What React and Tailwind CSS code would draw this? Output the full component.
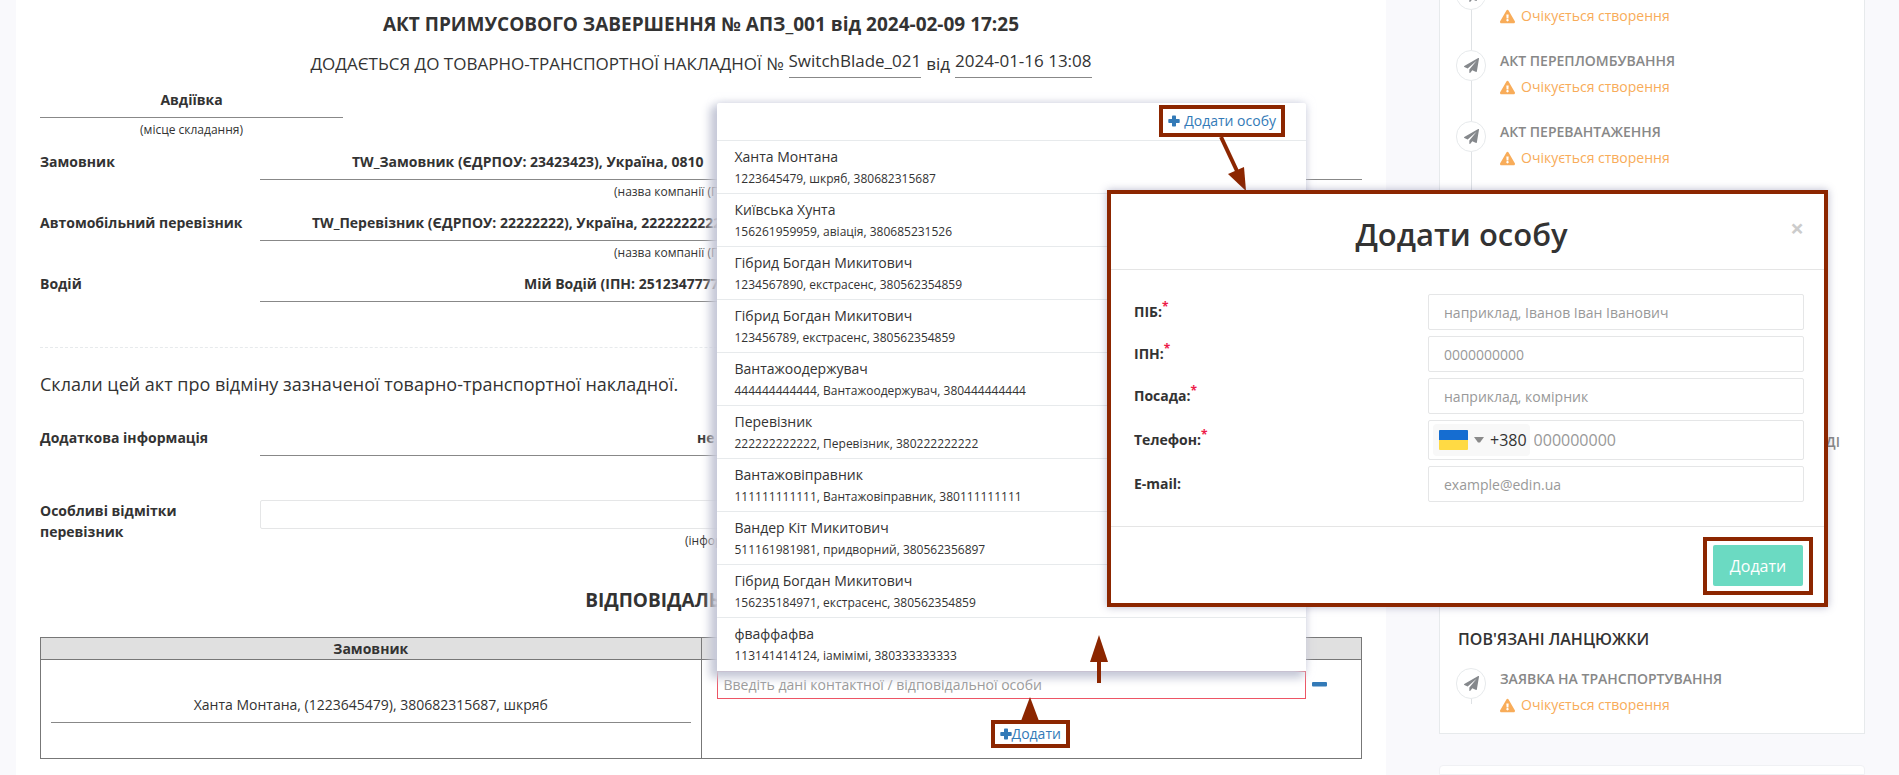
import { FaExclamationTriangle } from "react-icons/fa";

const people = [
  ["Ханта Монтана", "1223645479, шкряб, 380682315687"],
  ["Київська Хунта", "156261959959, авіація, 380685231526"],
  ["Гібрид Богдан Микитович", "1234567890, екстрасенс, 380562354859"],
  ["Гібрид Богдан Микитович", "123456789, екстрасенс, 380562354859"],
  ["Вантажоодержувач", "444444444444, Вантажоодержувач, 380444444444"],
  ["Перевізник", "222222222222, Перевізник, 380222222222"],
  ["Вантажовіправник", "111111111111, Вантажовіправник, 380111111111"],
  ["Вандер Кіт Микитович", "511161981981, придворний, 380562356897"],
  ["Гібрид Богдан Микитович", "156235184971, екстрасенс, 380562354859"],
  ["фваффафва", "113141414124, іамімімі, 380333333333"],
];

function PlaneIcon() {
  return (
    <svg width="15" height="15" viewBox="0 0 1792 1792" fill="currentColor" aria-hidden="true">
      <path d="M1764 11q33 24 27 64l-256 1536q-5 29-32 45-14 8-31 8-11 0-24-5l-453-185-242 295q-18 23-49 23-13 0-22-4-19-7-30.500-23.500t-11.500-36.500v-349l864-1059-1069 925-395-162q-37-14-40-55-2-40 32-59l1664-960q15-9 32-9 20 0 36 11z" />
    </svg>
  );
}

function PlusIcon() {
  return (
    <svg width="12" height="12" viewBox="0 0 12 12" fill="currentColor" aria-hidden="true">
      <rect x="4" y="0.500" width="4" height="11" rx="0.800" />
      <rect x="0.300" y="4" width="11.400" height="4" rx="0.800" />
    </svg>
  );
}

function Field({ label, value, caption, indent, captionIndent }) {
  return (
    <div className="flex">
      <div className="w-[220px] shrink-0 leading-5 font-bold">{label}</div>
      <div className="min-w-0 flex-1 overflow-hidden whitespace-nowrap">
        <div className={"border-b border-[#888] pb-[7px] leading-5 font-bold " + indent}>{value}</div>
        {caption && <div className={"mt-[3px] text-xs leading-[17px] " + captionIndent}>{caption}</div>}
      </div>
    </div>
  );
}

function ChainItem({ title, height = "h-[71px]", titleClass = "" }) {
  return (
    <li className={"flex gap-3.5 " + height}>
      <div className="flex w-[30px] shrink-0 flex-col items-center">
        <span className="flex h-[31px] w-[30px] shrink-0 items-center justify-center rounded-full border border-[#e7eaec] text-[#85888c]">
          <PlaneIcon />
        </span>
        <span className="w-px flex-1 bg-[#dfe2e5]" />
      </div>
      <div className="flex-1 whitespace-nowrap">
        <a href="#doc" className={"block leading-[22px] font-semibold text-[#888] " + titleClass}>{title}</a>
        <p className="mt-[3px] flex items-center gap-1.5 leading-6 text-[#f8ac59]">
          <FaExclamationTriangle className="size-[15px]" />
          Очікується створення
        </p>
      </div>
    </li>
  );
}

function PeopleMenu() {
  return (
    <div className="absolute right-0 bottom-full left-0 z-10 rounded-t-xs bg-white text-left shadow-[0_0_10px_rgba(190,194,215,0.6),-5px_5px_10px_2px_#c8cbd8]">
      <div className="flex h-[38px] items-center justify-end border-b border-[#e7eaec] pr-[21px]">
        <div className="relative border-4 border-[#8c2600] px-[5px]">
          <button className="flex items-center gap-1 leading-6 text-[#337ab7]">
            <PlusIcon />
            Додати особу
          </button>
          <svg className="absolute top-full left-14 z-30 mt-1" width="30" height="54" viewBox="0 0 30 54" aria-hidden="true">
            <path d="M2 0 L18 34" stroke="#8c2600" strokeWidth="4" />
            <path d="M9 37 L25 30 L27 54 Z" fill="#8c2600" />
          </svg>
        </div>
      </div>
      <ul>
        {people.map(([name, info], i) => (
          <li key={i} className="h-[53px] border-b border-[#e7eaec] px-[18px] pt-1.5 last:border-0">
            <div className="leading-5">{name}</div>
            <div className="text-xs leading-6">{info}</div>
          </li>
        ))}
      </ul>
    </div>
  );
}

function FormRow({ id, label, required, children }) {
  return (
    <div className="flex items-center">
      <label htmlFor={id} className="w-[294px] shrink-0 leading-5 font-bold">
        {label}
        {required && <sup className="text-xs text-[#ed1c4a]">*</sup>}
      </label>
      {children}
    </div>
  );
}

const inputClass =
  "h-9 min-w-0 flex-1 rounded-xs border border-[#e5e6e7] px-[15px] outline-none placeholder:text-[#999]";

function AddPersonModal() {
  return (
    <div
      role="dialog"
      aria-label="Додати особу"
      className="absolute top-[190px] right-[71px] z-20 w-[721px] border-4 border-[#8c2600] bg-white shadow-[0_0_8px_rgba(80,80,130,0.4)]"
    >
      <div className="relative flex h-[76px] items-center justify-center border-b border-[#e5e5e5] pr-3">
        <h2 className="mt-1 text-[31px] leading-9 font-semibold">Додати особу</h2>
        <button aria-label="Закрити" className="absolute top-6 right-5 text-2xl leading-5 font-bold text-[#ccc]">
          ×
        </button>
      </div>
      <form className="flex flex-col gap-1.5 py-6 pr-5 pl-[23px]">
        <FormRow id="pib" label="ПІБ:" required>
          <input id="pib" className={inputClass} placeholder="наприклад, Іванов Іван Іванович" />
        </FormRow>
        <FormRow id="ipn" label="ІПН:" required>
          <input id="ipn" className={inputClass} placeholder="0000000000" />
        </FormRow>
        <FormRow id="posada" label="Посада:" required>
          <input id="posada" className={inputClass} placeholder="наприклад, комірник" />
        </FormRow>
        <FormRow id="phone" label="Телефон:" required>
          <div className="flex h-10 flex-1 items-center rounded-xs border border-[#e5e6e7] px-1 text-base">
            <button type="button" className="flex h-8 items-center rounded bg-[#f8f8f8] pr-[3px] pl-1.5">
              <svg width="29" height="20" viewBox="0 0 29 20" aria-hidden="true">
                <rect width="29" height="20" rx="1" fill="#ffda44" />
                <path d="M1 0H28a1 1 0 0 1 1 1V10H0V1a1 1 0 0 1 1-1Z" fill="#156dd1" />
              </svg>
              <svg className="mx-1.5" width="10" height="6" viewBox="0 0 10 6" aria-hidden="true">
                <path d="M0 0H10L6 5.500H4Z" fill="#8a8a8a" />
              </svg>
              +380
            </button>
            <input id="phone" className="min-w-0 flex-1 px-1 outline-none placeholder:text-[#999]" placeholder="000000000" />
          </div>
        </FormRow>
        <FormRow id="email" label="E-mail:">
          <input id="email" type="email" className={inputClass} placeholder="example@edin.ua" />
        </FormRow>
      </form>
      <div className="flex justify-end border-t border-[#e5e5e5] pt-2.5 pr-[11px] pb-2">
        <div className="border-4 border-[#8c2600] px-1.5 pt-1 pb-[5px]">
          <button className="h-[41px] w-[90px] rounded-xs bg-[#6bdac2] text-base text-white">Додати</button>
        </div>
      </div>
    </div>
  );
}

export default function App() {
  return (
    <div className="relative flex h-screen overflow-hidden bg-[#f9f9fc] pr-[34px] pl-4 font-['Open_Sans','Noto_Sans',sans-serif] text-sm text-[#333]">
      <main className="min-w-0 flex-1 bg-white px-6 pt-3">
        <h1 className="text-center text-[19px] leading-6 font-bold">
          АКТ ПРИМУСОВОГО ЗАВЕРШЕННЯ № АПЗ_001 від 2024-02-09 17:25
        </h1>
        <div className="mt-2.5 flex h-8 justify-center gap-[5px] text-[17px] leading-6">
          <span className="pt-1.5">ДОДАЄТЬСЯ ДО ТОВАРНО-ТРАНСПОРТНОЇ НАКЛАДНОЇ №</span>
          <span className="border-b border-[#888] pt-[3px]">SwitchBlade_021</span>
          <span className="pt-1.5">від</span>
          <span className="border-b border-[#888] pt-[3px]">2024-01-16 13:08</span>
        </div>
        <div className="mt-3 w-[303px] text-center">
          <div className="border-b border-[#888] pb-[7px] leading-5 font-bold">Авдіївка</div>
          <div className="mt-[3px] text-xs leading-[17px]">(місце складання)</div>
        </div>
        <section className="mt-3.5 flex flex-col gap-[13px]">
          <Field
            label="Замовник"
            value="TW_Замовник (ЄДРПОУ: 23423423), Україна, 0810"
            indent="pl-[92px]"
            caption="(назва компанії (ПІБ))"
            captionIndent="pl-[354px]"
          />
          <Field
            label="Автомобільний перевізник"
            value="TW_Перевізник (ЄДРПОУ: 22222222), Україна, 2222222222"
            indent="pl-[52px]"
            caption="(назва компанії (ПІБ))"
            captionIndent="pl-[354px]"
          />
          <Field label="Водій" value="Мій Водій (ІПН: 2512347777)" indent="pl-[264px]" />
        </section>
        <hr className="mt-[45px] border-0 border-t border-dashed border-[#e7eaec]" />
        <p className="mt-6 text-lg leading-6 font-medium">
          Склали цей акт про відміну зазначеної товарно-транспортної накладної.
        </p>
        <div className="mt-8">
          <Field label="Додаткова інформація" value="не вказано" indent="pl-[437px]" />
        </div>
        <div className="mt-11 flex">
          <label htmlFor="marks" className="w-[220px] shrink-0 pr-10 leading-[21px] font-bold">
            Особливі відмітки перевізник
          </label>
          <div className="flex-1">
            <input id="marks" className="block h-[29px] w-full rounded-xs border border-[#e5e6e7] px-2 outline-none" />
            <div className="mt-[3px] pl-[425px] text-xs leading-[17px]">(інформація)</div>
          </div>
        </div>
        <h2 className="mt-[39px] text-center text-[19px] leading-6 font-bold">ВІДПОВІДАЛЬНІ ОСОБИ</h2>
        <table className="mt-[25px] w-full table-fixed border-collapse text-center">
          <thead>
            <tr className="h-[22px] bg-[#e0e0e0]">
              <th className="border border-[#777] font-bold">Замовник</th>
              <th className="border border-[#777] font-bold">Перевізник</th>
            </tr>
          </thead>
          <tbody>
            <tr className="h-[99px]">
              <td className="border border-[#777] px-2.5">
                <div className="border-b border-[#888] pb-[7px] leading-5">
                  Ханта Монтана, (1223645479), 380682315687, шкряб
                </div>
              </td>
              <td className="border border-[#777] pr-[34px] pl-[15px]">
                <div className="flex items-center gap-1.5">
                  <div className="relative flex-1">
                    <input
                      aria-label="Контактна особа"
                      placeholder="Введіть дані контактної / відповідальної особи"
                      className="block h-7 w-full border border-[#ed5565] px-1.5 outline-none placeholder:text-[#999]"
                    />
                    <PeopleMenu />
                    <svg className="absolute -top-9 left-[373px] z-20" width="18" height="48" viewBox="0 0 18 48" aria-hidden="true">
                      <path d="M9 0 L18 27 H11 V48 H7 V27 H0 Z" fill="#8c2600" />
                    </svg>
                  </div>
                  <button aria-label="Видалити" className="text-[#337ab7]">
                    <svg width="15" height="5" viewBox="0 0 15 5" fill="currentColor" aria-hidden="true">
                      <rect width="15" height="4.500" rx="1" />
                    </svg>
                  </button>
                </div>
                <div className="relative mt-[21px] ml-[17px] flex justify-center">
                  <svg className="absolute bottom-full z-20 -mb-px" width="18" height="24" viewBox="0 0 18 24" aria-hidden="true">
                    <path d="M9 0 L18 24 H0 Z" fill="#8c2600" />
                  </svg>
                  <button className="flex items-center border-4 border-[#8c2600] px-[5px] leading-5 text-[#337ab7]">
                    <PlusIcon />
                    Додати
                  </button>
                </div>
              </td>
            </tr>
          </tbody>
        </table>
      </main>

      <aside className="ml-[53px] flex w-[426px] shrink-0 flex-col gap-[31px]">
        <div className="-mt-[22px] h-[756px] shrink-0 border border-[#e7eaec] bg-white px-4">
          <ul>
            <ChainItem title="АКТ ЗАВАНТАЖЕННЯ" />
            <ChainItem title="АКТ ПЕРЕПЛОМБУВАННЯ" />
            <ChainItem title="АКТ ПЕРЕВАНТАЖЕННЯ" />
            <ChainItem title="АКТ РОЗВАНТАЖЕННЯ" height="h-[239px]" />
            <ChainItem title="АКТ РОЗБІЖНОСТЕЙ НА СКЛАДІ" titleClass="pr-2 text-right" />
          </ul>
          <h3 className="mt-[125px] pl-0.5 text-base leading-6 font-semibold">ПОВ'ЯЗАНІ ЛАНЦЮЖКИ</h3>
          <ul className="mt-[17px]">
            <ChainItem title="ЗАЯВКА НА ТРАНСПОРТУВАННЯ" height="h-9" />
          </ul>
        </div>
        <div className="h-40 rounded-t border border-[#f0f1f4] bg-white" />
      </aside>

      <AddPersonModal />
    </div>
  );
}
